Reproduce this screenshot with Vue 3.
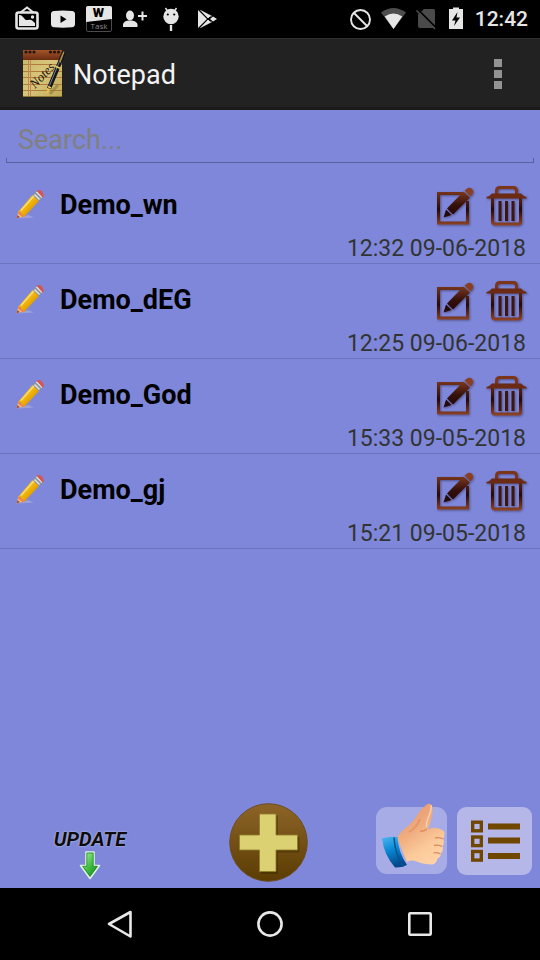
<script setup>
import { ref, computed } from 'vue'

const query = ref('')
const notes = ref([
  { id: 1, title: 'Demo_wn', stamp: '12:32 09-06-2018' },
  { id: 2, title: 'Demo_dEG', stamp: '12:25 09-06-2018' },
  { id: 3, title: 'Demo_God', stamp: '15:33 09-05-2018' },
  { id: 4, title: 'Demo_gj', stamp: '15:21 09-05-2018' },
])
const shown = computed(() =>
  notes.value.filter((n) => n.title.toLowerCase().includes(query.value.toLowerCase()))
)
function removeNote(id) {
  notes.value = notes.value.filter((n) => n.id !== id)
}
</script>

<template>
  <div class="screen">
    <!-- Shared gradients -->
    <svg class="defs" width="0" height="0" aria-hidden="true">
      <defs>
        <linearGradient id="rust" x1="0" y1="0" x2="0" y2="1">
          <stop offset="0" stop-color="#7d3a1e" />
          <stop offset=".6" stop-color="#34100a" />
          <stop offset="1" stop-color="#260a08" />
        </linearGradient>
        <linearGradient id="rustLine" gradientUnits="userSpaceOnUse" x1="0" y1="2" x2="0" y2="40">
          <stop offset="0" stop-color="#8a3f20" />
          <stop offset=".6" stop-color="#260a06" />
          <stop offset="1" stop-color="#8f4322" />
        </linearGradient>
        <linearGradient id="pencilBody" x1="0" y1="0" x2="1" y2="1">
          <stop offset="0" stop-color="#ffe05a" />
          <stop offset=".5" stop-color="#efb208" />
          <stop offset="1" stop-color="#b97400" />
        </linearGradient>
      </defs>
    </svg>

    <div class="status">
      <div class="status-left">
        <svg width="36" height="38" viewBox="0 0 36 38" aria-hidden="true">
          <path d="M11.500 12.500L18 7.500l6.500 5" fill="none" stroke="#e6e6e6" stroke-width="2" />
          <rect x="7.500" y="12.500" width="21" height="16" rx="2" fill="none" stroke="#e6e6e6" stroke-width="2.600" />
          <path d="M10 15c4-1 5 6 9 5 3-1 4 0 7 3v3H10z" fill="#e6e6e6" />
          <circle cx="23.500" cy="17" r="1.700" fill="#e6e6e6" />
        </svg>
        <svg width="36" height="38" viewBox="0 0 36 38" aria-hidden="true">
          <path d="M9 11q9-1 18 0 3 .3 3 3v10q0 3-3 3.300-9 .8-18 0-3-.3-3-3.300V14q0-2.700 3-3z" fill="#e6e6e6" />
          <path d="M15.500 15.500l6 3.700-6 3.700z" fill="#000" />
        </svg>
        <svg width="36" height="38" viewBox="0 0 36 38" aria-hidden="true">
          <rect x="5.500" y="6.500" width="25" height="25" rx="1.500" fill="#000" stroke="#4c4c4c" />
          <path d="M5 8q0-2 2-2h22q2 0 2 2v11L5 22z" fill="#e6e6e6" />
          <text x="17.500" y="17" text-anchor="middle" class="w-big">W</text>
          <text x="18" y="29" text-anchor="middle" class="w-small">Task</text>
        </svg>
        <svg width="36" height="38" viewBox="0 0 36 38" aria-hidden="true">
          <ellipse cx="13" cy="15.500" rx="4" ry="5" fill="#e6e6e6" />
          <path d="M6 27v-2c0-3 3-4 5-4.500h4c2 .5 5.500 1.500 5.500 4.500v2z" fill="#e6e6e6" />
          <path d="M25.500 11.500v9M21 16h9" stroke="#e6e6e6" stroke-width="2" />
        </svg>
        <svg width="36" height="38" viewBox="0 0 36 38" aria-hidden="true">
          <path d="M14.500 11l-2-3M21.500 11l2-3" stroke="#e6e6e6" stroke-width="1.500" />
          <circle cx="18" cy="16.500" r="7.700" fill="#e6e6e6" />
          <circle cx="14.800" cy="14.500" r="1.100" fill="#000" />
          <circle cx="21.200" cy="14.500" r="1.100" fill="#000" />
          <path d="M18 25v6" stroke="#e6e6e6" stroke-width="2.400" />
        </svg>
        <svg width="36" height="38" viewBox="0 0 36 38" aria-hidden="true">
          <path d="M9 10l9 9-9 9z" fill="#e6e6e6" />
          <path d="M10.500 9.500L23 16l-4 2.500zM10.500 28.500L23 22l-4-2.500z" fill="#e6e6e6" />
          <path d="M24 16.500l4 2.500-4 2.500-3-2.500z" fill="#e6e6e6" />
          <path d="M9.500 9.500l12 12M9.500 28.500l12-12" stroke="#000" stroke-width="1" />
        </svg>
      </div>
      <div class="status-right">
        <svg width="33" height="38" viewBox="0 0 33 38" aria-hidden="true">
          <circle cx="16.500" cy="19.500" r="9.500" fill="none" stroke="#e6e6e6" stroke-width="1.900" />
          <path d="M10 13l13 13" stroke="#e6e6e6" stroke-width="1.900" />
        </svg>
        <svg width="33" height="38" viewBox="0 0 33 38" aria-hidden="true">
          <path d="M16.500 29L4 12.500q12.500-9 25 0z" fill="#4d4d4d" />
          <path d="M16.500 29L7.700 16.500q8.800-6 17.600 0z" fill="#e6e6e6" />
        </svg>
        <svg width="33" height="38" viewBox="0 0 33 38" aria-hidden="true">
          <path d="M14 9h9.500q1.500 0 1.500 1.500V28H10q-2 0-2-2V14.500z" fill="#4a4a4a" />
          <path d="M7.500 9.100l19 19" stroke="#000" stroke-width="1.600" />
          <path d="M6.500 10.500l18.500 18.500" stroke="#4a4a4a" stroke-width="1.600" />
        </svg>
        <svg width="26" height="38" viewBox="0 0 26 38" aria-hidden="true">
          <path d="M6 9h4V7.500h6V9h4v20H6z" fill="#e6e6e6" />
          <path d="M14.500 12L9 20.500h3.500L11 26l6-8.500h-3.500z" fill="#000" />
        </svg>
        <span class="clock">12:42</span>
      </div>
    </div>

    <header class="appbar">
      <svg width="45" height="50" viewBox="0 0 45 50" aria-hidden="true">
        <defs>
          <linearGradient id="paper" x1="0" y1="0" x2="1" y2="1">
            <stop offset="0" stop-color="#c9b464" />
            <stop offset=".5" stop-color="#d8c67c" />
            <stop offset="1" stop-color="#c0aa55" />
          </linearGradient>
          <linearGradient id="binding" x1="0" y1="0" x2="0" y2="1">
            <stop offset="0" stop-color="#a4562a" />
            <stop offset="1" stop-color="#6b2c10" />
          </linearGradient>
        </defs>
        <rect x="1" y="1" width="39" height="47" fill="url(#paper)" />
        <rect x="1" y="1" width="39" height="10" fill="url(#binding)" />
        <path d="M1 15.500h39M1 22.500h39M1 28.500h39M1 35.500h39M1 41.500h39" stroke="#b07b3c" stroke-width="1" />
        <path d="M6.500 11v37M8.500 11v37" stroke="#c08850" stroke-width="1" />
        <path d="M1 47.500h39" stroke="#8a7430" />
        <g fill="#241510">
          <circle cx="4" cy="3" r="1.600" /><circle cx="8" cy="3" r="1.600" /><circle cx="12" cy="3" r="1.600" />
          <circle cx="28.500" cy="3" r="1.600" /><circle cx="32.500" cy="3" r="1.600" /><circle cx="36.500" cy="3" r="1.600" />
        </g>
        <text x="13" y="40" transform="rotate(-46 13 40)" class="script">Notes</text>
        <path d="M28 45l8-9" stroke="#8d7a3e" stroke-width="3" opacity=".6" />
        <path d="M24.500 45l1-6.500 3 1.500z" fill="#f0c040" />
        <path d="M27 39.500L36 18" stroke="#14161c" stroke-width="4.400" />
        <path d="M36 18l5.500-14" stroke="#14161c" stroke-width="4.200" stroke-linecap="round" />
        <path d="M27.500 36.500L41 4" stroke="#74808c" stroke-width="1" />
        <path d="M34 17.500l4 1.800M26 37.500l3 1.500" stroke="#f1d060" stroke-width="1.800" />
        <path d="M42 2.500l-4 11" stroke="#c89a35" stroke-width="1.100" />
      </svg>
      <h1>Notepad</h1>
      <button class="overflow" type="button" aria-label="More options">
        <i></i><i></i><i></i>
      </button>
    </header>

    <main class="content">
      <div class="search">
        <input v-model="query" type="text" placeholder="Search..." aria-label="Search notes" />
        <div class="bracket"></div>
      </div>

      <ul class="notes">
        <li v-for="note in shown" :key="note.id">
          <div class="line">
            <svg width="32" height="32" viewBox="0 0 32 32" aria-hidden="true">
              <path d="M4 29.500l16-1-6-2.500z" fill="#a9addf" opacity=".7" />
              <path d="M2.500 29.500L4.500 22l6 5z" fill="#f3c49a" />
              <path d="M2.500 29.500l1-3.500 2.500 2z" fill="#a5502c" />
              <path d="M4.500 22.500L18.500 6l6.500 6-14.500 15.500q-1-2-2.500-2-.5-2-3.500-3z" fill="url(#pencilBody)" />
              <path d="M4.500 22q3 1 3.500 3.200 1.500 0 2.500 2.200l-2 .8-4.600-3.500z" fill="#f0873f" />
              <path d="M18.500 6L23 1.500l6.500 6L25 12z" fill="#8f9399" />
              <path d="M20.500 5.500l5 5M22.500 3l5.500 5.500" stroke="#dfe3e6" stroke-width="1.500" />
              <path d="M22.800 1.800q2-2 4.700.5t2.200 5.200l-1.200 1z" fill="#d9534f" />
              <path d="M7 21.500L20 7" stroke="#fff0a0" stroke-width="1.200" opacity=".7" />
            </svg>
            <h2>{{ note.title }}</h2>
            <button type="button" :aria-label="'Edit ' + note.title">
              <svg width="42" height="42" viewBox="0 0 42 42" aria-hidden="true">
                <path d="M28 8.500H3.500v29.500h29V16" fill="none" stroke="url(#rustLine)" stroke-width="3" />
                <path d="M8.500 32.500l2.500-8 5.500 5.500z" fill="#260a08" />
                <path d="M12 23.500L28.500 6.500l6.500 6L18 29.500z" fill="url(#rust)" />
                <path d="M29.500 5.500l2-1.500q3-2.500 5.500 0 2.500 3-.3 6L35.500 11.500z" fill="#8a3f22" />
              </svg>
            </button>
            <button type="button" :aria-label="'Delete ' + note.title" @click="removeNote(note.id)">
              <svg width="42" height="42" viewBox="0 0 42 42" aria-hidden="true">
                <path d="M10.500 9V6q0-3.500 3.500-3.500h13q3.500 0 3.500 3.500v3" fill="none" stroke="#7c3519" stroke-width="3" />
                <path d="M6 8.500h29q2 2.500 5.500 3.500v1.500H.5V12Q4 11 6 8.500z" fill="#6b2a13" />
                <path d="M6.500 13v23.500q0 2.500 2.500 2.500h23q2.500 0 2.500-2.500V13" fill="none" stroke="url(#rustLine)" stroke-width="3" />
                <path d="M14 16v20M20.500 16v20M27 16v20" stroke="#3d160d" stroke-width="3" />
              </svg>
            </button>
          </div>
          <time>{{ note.stamp }}</time>
        </li>
      </ul>

      <footer class="tools">
        <button class="update" type="button">
          <span>UPDATE</span>
          <svg width="22" height="30" viewBox="0 0 22 30" aria-hidden="true">
            <defs>
              <linearGradient id="leaf" x1="0" y1="0" x2="1" y2="1">
                <stop offset="0" stop-color="#c9f5b8" />
                <stop offset=".5" stop-color="#43c043" />
                <stop offset="1" stop-color="#087a12" />
              </linearGradient>
            </defs>
            <path d="M7 2h8v13.500h5.500L11 28.500 1.500 15.500H7z" fill="url(#leaf)" stroke="#dff0e0" stroke-width="1.600" stroke-linejoin="round" />
            <path d="M7.800 3v13.300H3.800L11 26l7.200-9.700h-4V3z" fill="none" stroke="#1f8a2a" stroke-width=".8" />
          </svg>
        </button>
        <button type="button" aria-label="Add note">
          <svg width="82" height="80" viewBox="0 0 82 80" aria-hidden="true">
            <defs>
              <linearGradient id="bronze" x1="0" y1="0" x2="0" y2="1">
                <stop offset="0" stop-color="#8d6428" />
                <stop offset="1" stop-color="#5a3c02" />
              </linearGradient>
            </defs>
            <circle cx="39.500" cy="39.500" r="38.800" fill="url(#bronze)" stroke="#6d4c1c" />
            <path d="M32 12.500h17v21.500h21.500v15.500H49v21.500H32z" fill="#3c2800" opacity=".45" />
            <path d="M30.500 11h16.500v21h21.500v15H47v21.500H30.500V47H10.500V32h20z" fill="#dbd072" stroke="#8d7b2c" stroke-width=".8" />
          </svg>
        </button>
        <div class="pair">
          <button type="button" aria-label="Rate this app">
            <svg width="72" height="80" viewBox="0 0 72 80" aria-hidden="true">
              <defs>
                <linearGradient id="cuff" x1="0" y1="0" x2="0.300" y2="1">
                  <stop offset="0" stop-color="#4cb8f4" />
                  <stop offset=".5" stop-color="#0a86d2" />
                  <stop offset="1" stop-color="#04498c" />
                </linearGradient>
                <linearGradient id="skin" x1="0.200" y1="0" x2="0.700" y2="1">
                  <stop offset="0" stop-color="#e8976a" />
                  <stop offset=".4" stop-color="#efab7e" />
                  <stop offset=".75" stop-color="#fccb9c" />
                  <stop offset="1" stop-color="#ffd2a4" />
                </linearGradient>
              </defs>
              <rect x="0" y="4" width="71" height="67" rx="11" fill="#a8ace6" />
              <path d="M21 35Q24 29 31 24q7-6 11-13 3-5 7-8 2-2.500 4.500-2.300Q57 1 56.500 9q-.5 7-4.500 17 7-2 12 0 5 1.500 4.500 5 0 3-1.500 4.500 2 4-.5 7.500 1.500 4.500-1.500 7 0 4-3.500 5.500-1 5-5 6-9 0-16-3-5-2-9.500.5z" fill="url(#skin)" />
              <path d="M55 2q.8 5-2.500 12-2.500 6-2 10" fill="none" stroke="#f7d2b4" stroke-width="1.400" />
              <path d="M51 26q-4 3-7 2M67 36q-4-2-8-1M66 43.500q-4-2-8-1M64.500 51q-4-2-7-1" fill="none" stroke="#dc8a5c" stroke-width="1.300" />
              <path d="M44 16q-3 8-11 13" fill="none" stroke="#dd8656" stroke-width="2" opacity=".5" />
              <path d="M6 35.500q8-2.500 15.500-1.500 1 16 9.500 28-6 3-12 2.500Q8 52 6 35.500z" fill="url(#cuff)" />
              <path d="M18 34.500q1 17 9.500 29" fill="none" stroke="#045391" stroke-width="1.500" />
            </svg>
          </button>
          <button type="button" aria-label="List view">
            <svg width="75" height="80" viewBox="0 0 75 80" aria-hidden="true">
              <rect x="0" y="4" width="75" height="68" rx="9" fill="#b4b7e8" />
              <g fill="none" stroke="#704700" stroke-width="3.400">
                <rect x="15.700" y="19.200" width="8.600" height="8.600" />
                <rect x="15.700" y="34" width="8.600" height="8.600" />
                <rect x="15.700" y="48.500" width="8.600" height="8.600" />
              </g>
              <path d="M31 23.500h32M31 37.500h32M31 53h32" stroke="#704700" stroke-width="6" />
            </svg>
          </button>
        </div>
      </footer>
    </main>

    <nav class="sysnav">
      <button type="button" aria-label="Back">
        <svg width="34" height="34" viewBox="0 0 34 34" aria-hidden="true">
          <path d="M27.500 5v24.500L6 17z" fill="none" stroke="#e8e8e8" stroke-width="2.600" stroke-linejoin="round" />
        </svg>
      </button>
      <button type="button" aria-label="Home">
        <svg width="34" height="34" viewBox="0 0 34 34" aria-hidden="true">
          <circle cx="17" cy="17" r="11.600" fill="none" stroke="#e8e8e8" stroke-width="2.600" />
        </svg>
      </button>
      <button type="button" aria-label="Recent apps">
        <svg width="34" height="34" viewBox="0 0 34 34" aria-hidden="true">
          <rect x="6.300" y="6.300" width="21.400" height="21.400" rx="1" fill="none" stroke="#e8e8e8" stroke-width="2.600" />
        </svg>
      </button>
    </nav>
  </div>
</template>

<style>
body {
  margin: 0;
  background: #000;
}
</style>

<style scoped>
.screen {
  min-height: 100vh;
  display: flex;
  flex-direction: column;
  background: #7e87d9;
  font-family: Roboto, "Liberation Sans", sans-serif;
}
.defs {
  position: absolute;
}
svg {
  display: block;
  flex: none;
}
button {
  margin: 0;
  padding: 0;
  border: 0;
  background: none;
  font: inherit;
  cursor: pointer;
}
.status {
  display: flex;
  justify-content: space-between;
  height: 38px;
  padding: 0 12px 0 9px;
  background: #000;
}
.status-left,
.status-right {
  display: flex;
  align-items: center;
}
.clock {
  padding-left: 6px;
  color: #e6e6e6;
  font-size: 21px;
  font-weight: 500;
  line-height: 40px;
}
.w-big {
  font: 900 13px Roboto, sans-serif;
  fill: #000;
}
.w-small {
  font: 8px "Open Sans", sans-serif;
  fill: #8c8c8c;
}
.script {
  font: italic 13px "Liberation Serif", serif;
  fill: #1b140a;
}
.appbar {
  display: flex;
  align-items: center;
  gap: 6px;
  height: 66px;
  padding: 2px 18px 0 22px;
  border-top: 1px solid #303030;
  border-bottom: 3px solid #1a1a1a;
  background: #222;
}
.appbar h1 {
  flex: 1;
  margin: 0;
  padding-top: 2px;
  color: #f3f3f3;
  font-size: 27px;
  font-weight: 400;
}
.overflow {
  display: flex;
  flex-direction: column;
  align-items: center;
  gap: 3px;
  width: 48px;
}
.overflow i {
  width: 8px;
  height: 8px;
  background: #939393;
}
.content {
  flex: 1;
  display: flex;
  flex-direction: column;
}
.search {
  padding: 12px 6px 6px;
}
.search input {
  display: block;
  box-sizing: border-box;
  width: 100%;
  height: 36px;
  padding: 0 12px;
  border: 0;
  outline: 0;
  background: none;
  color: #000;
  font: 27px Roboto, sans-serif;
}
.search input::placeholder {
  color: #808080;
  opacity: 1;
}
.bracket {
  height: 4px;
  border: solid #5a609c;
  border-width: 0 1px 1px;
}
.notes {
  margin: 0;
  padding: 0;
  list-style: none;
}
.notes li {
  padding: 16px 12px 0 14px;
  border-bottom: 1px solid #6c74bf;
}
.line {
  display: flex;
  align-items: center;
  gap: 9px;
}
.line > svg,
.line h2 {
  padding-bottom: 3px;
}
.line h2 {
  flex: 1;
  margin: 0;
  padding-left: 5px;
  color: #000;
  font-size: 27px;
  font-weight: 700;
  line-height: 36px;
}
.line button svg {
  filter: drop-shadow(1px 1px 1px rgba(40, 30, 60, 0.5));
}
.notes time {
  display: block;
  padding: 8px 2px 0 0;
  color: #333;
  font-size: 23px;
  line-height: 28px;
  text-align: right;
}
.tools {
  display: grid;
  grid-template-columns: repeat(3, 1fr);
  align-items: center;
  justify-items: center;
  margin-top: auto;
  padding-bottom: 5px;
}
.update {
  display: flex;
  flex-direction: column;
  align-items: center;
  align-self: end;
  padding-bottom: 3px;
}
.update span {
  color: #0c0c0c;
  font: italic 700 20px/22px Roboto, sans-serif;
  text-shadow: 0 0 2px #d8daf0;
}
.pair {
  display: flex;
  justify-self: end;
  gap: 9px;
  padding-right: 8px;
}
.sysnav {
  display: flex;
  justify-content: center;
  align-items: center;
  gap: 116px;
  height: 72px;
  background: #000;
}
</style>
